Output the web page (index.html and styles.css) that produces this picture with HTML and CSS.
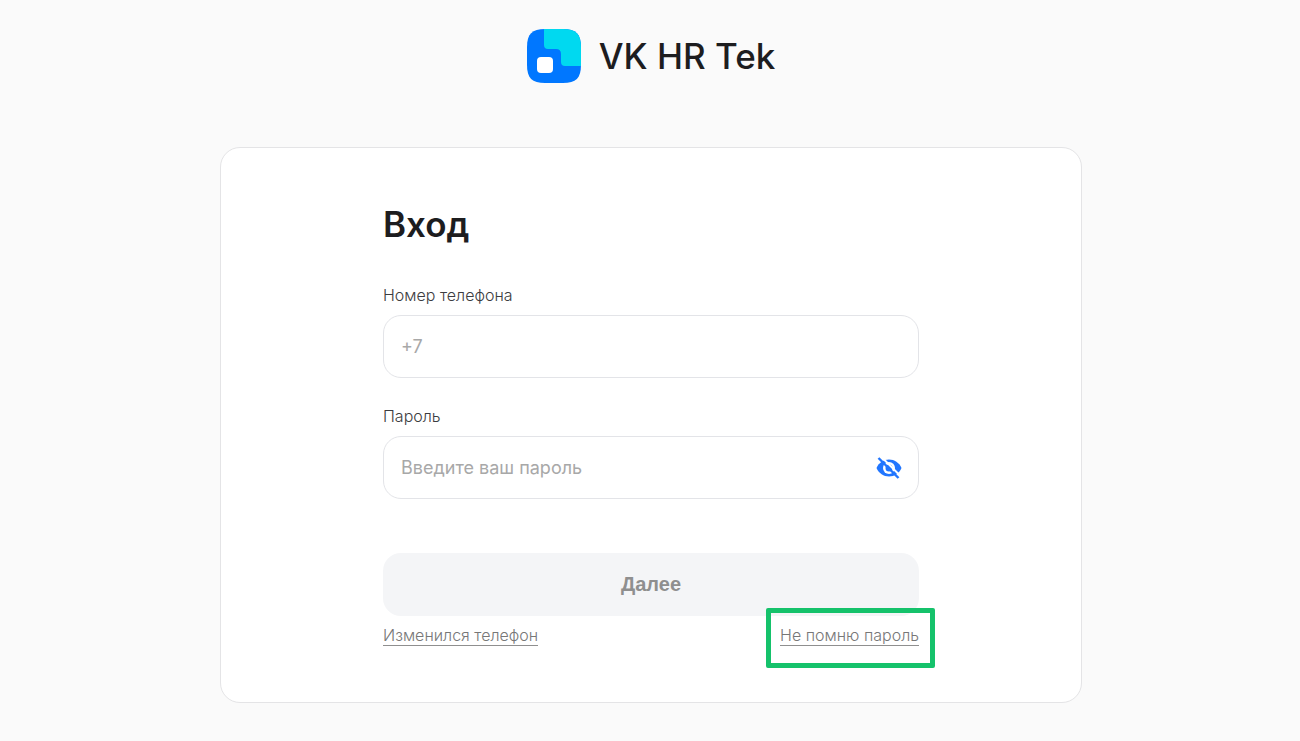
FILE: index.html
```html
<!DOCTYPE html>
<html lang="ru">
<head>
    <meta charset="utf-8">
    <meta name="viewport" content="width=device-width, initial-scale=1">
    <title>VK HR Tek</title>
    <link rel="stylesheet" href="styles.css">
</head>
<body>
<header class="header">
    <svg class="logo" viewBox="0 0 54 54" aria-hidden="true">
        <path fill="#0077ff" d="M18 0h18c13 0 18 5 18 18v18c0 13-5 18-18 18H18C5 54 0 49 0 36V18C0 5 5 0 18 0z"/>
        <path fill="#00d9f0" d="M17 0h19c13 0 18 5 18 18v19H38q-4 0-4-4v-8q0-5-5-5h-8q-4 0-4-4z"/>
        <rect fill="#fff" x="10" y="28" width="16" height="16" rx="4"/>
    </svg>
    <span class="brand">VK HR Tek</span>
</header>
<main class="card">
    <form class="form">
        <h1>Вход</h1>
        <div class="field">
            <label for="phone">Номер телефона</label>
            <div class="control">
                <input type="tel" id="phone" placeholder="+7">
            </div>
        </div>
        <div class="field">
            <label for="password">Пароль</label>
            <div class="control">
                <input type="password" id="password" placeholder="Введите ваш пароль">
                <button type="button" class="eye" aria-label="Показать пароль">
                    <svg viewBox="0 0 26 24">
                        <path fill="#2176ff" d="M13 3.500C7.500 3.500 3 6.500.5 12 3 17.500 7.500 20.500 13 20.500S23 17.500 25.500 12C23 6.500 18.500 3.500 13 3.500z"/>
                        <circle cx="13" cy="12" r="6" fill="#fff"/>
                        <circle cx="13" cy="12" r="3.500" fill="#2176ff"/>
                        <path stroke="#fff" stroke-width="2" d="M4.500 0l20 20"/>
                        <path stroke="#2176ff" stroke-width="2.400" d="M2.500 2l20 20"/>
                    </svg>
                </button>
            </div>
        </div>
        <button type="submit" class="submit">Далее</button>
        <div class="links">
            <a href="#">Изменился телефон</a>
            <a href="#" class="marked">Не помню пароль</a>
        </div>
    </form>
</main>
</body>
</html>
```
FILE: styles.css
```css
* {
    box-sizing: border-box;
}

body {
    margin: 0;
    padding: 29px 20px 38px 22px;
    background: #fafafa;
    color: #1d1d1f;
    font: 300 16px/20px Inter, "Liberation Sans", sans-serif;
}

.header {
    display: flex;
    align-items: center;
    justify-content: center;
    gap: 18px;
}

.logo {
    width: 54px;
    height: 54px;
}

.brand {
    font-size: 35px;
    font-weight: 500;
    line-height: 54px;
}

.card {
    max-width: 862px;
    margin: 64px auto 0;
    padding: 54px 20px 56px;
    background: #fff;
    border: 1px solid #e4e4e6;
    border-radius: 20px;
}

.form {
    max-width: 536px;
    margin: 0 auto;
}

h1 {
    margin: 0 0 39px;
    font-size: 35px;
    font-weight: 600;
    line-height: 44px;
}

.field {
    margin-bottom: 28px;
}

.field label {
    display: block;
    margin-bottom: 10px;
    color: #3c3c40;
}

.control {
    position: relative;
}

.control input {
    display: block;
    width: 100%;
    height: 63px;
    padding: 0 56px 0 17px;
    background: #fff;
    border: 1px solid #e3e4e8;
    border-radius: 18px;
    color: #1d1d1f;
    font: 18px Inter, "Liberation Sans", sans-serif;
}

.control input::placeholder {
    color: #a8a8a8;
    opacity: 1;
}

.eye {
    position: absolute;
    top: 20px;
    right: 17px;
    width: 26px;
    height: 24px;
    padding: 0;
    background: none;
    border: 0;
    cursor: pointer;
}

.eye svg {
    display: block;
}

.submit {
    display: block;
    width: 100%;
    height: 63px;
    margin-top: 54px;
    background: #f4f5f7;
    border: 0;
    border-radius: 18px;
    color: #8f8f8f;
    font: bold 20px "Liberation Sans", Arial, sans-serif;
}

.links {
    display: flex;
    justify-content: space-between;
    margin-top: 9px;
}

.links a {
    border-bottom: 1px solid #8f8f8f;
    color: #777;
    text-decoration: none;
}

.marked {
    position: relative;
}

/* frame around the password link */
.marked::after {
    content: "";
    position: absolute;
    inset: -17px -16px -23px -14px;
    border: 5px solid #15c26b;
    border-radius: 2px;
}
```
